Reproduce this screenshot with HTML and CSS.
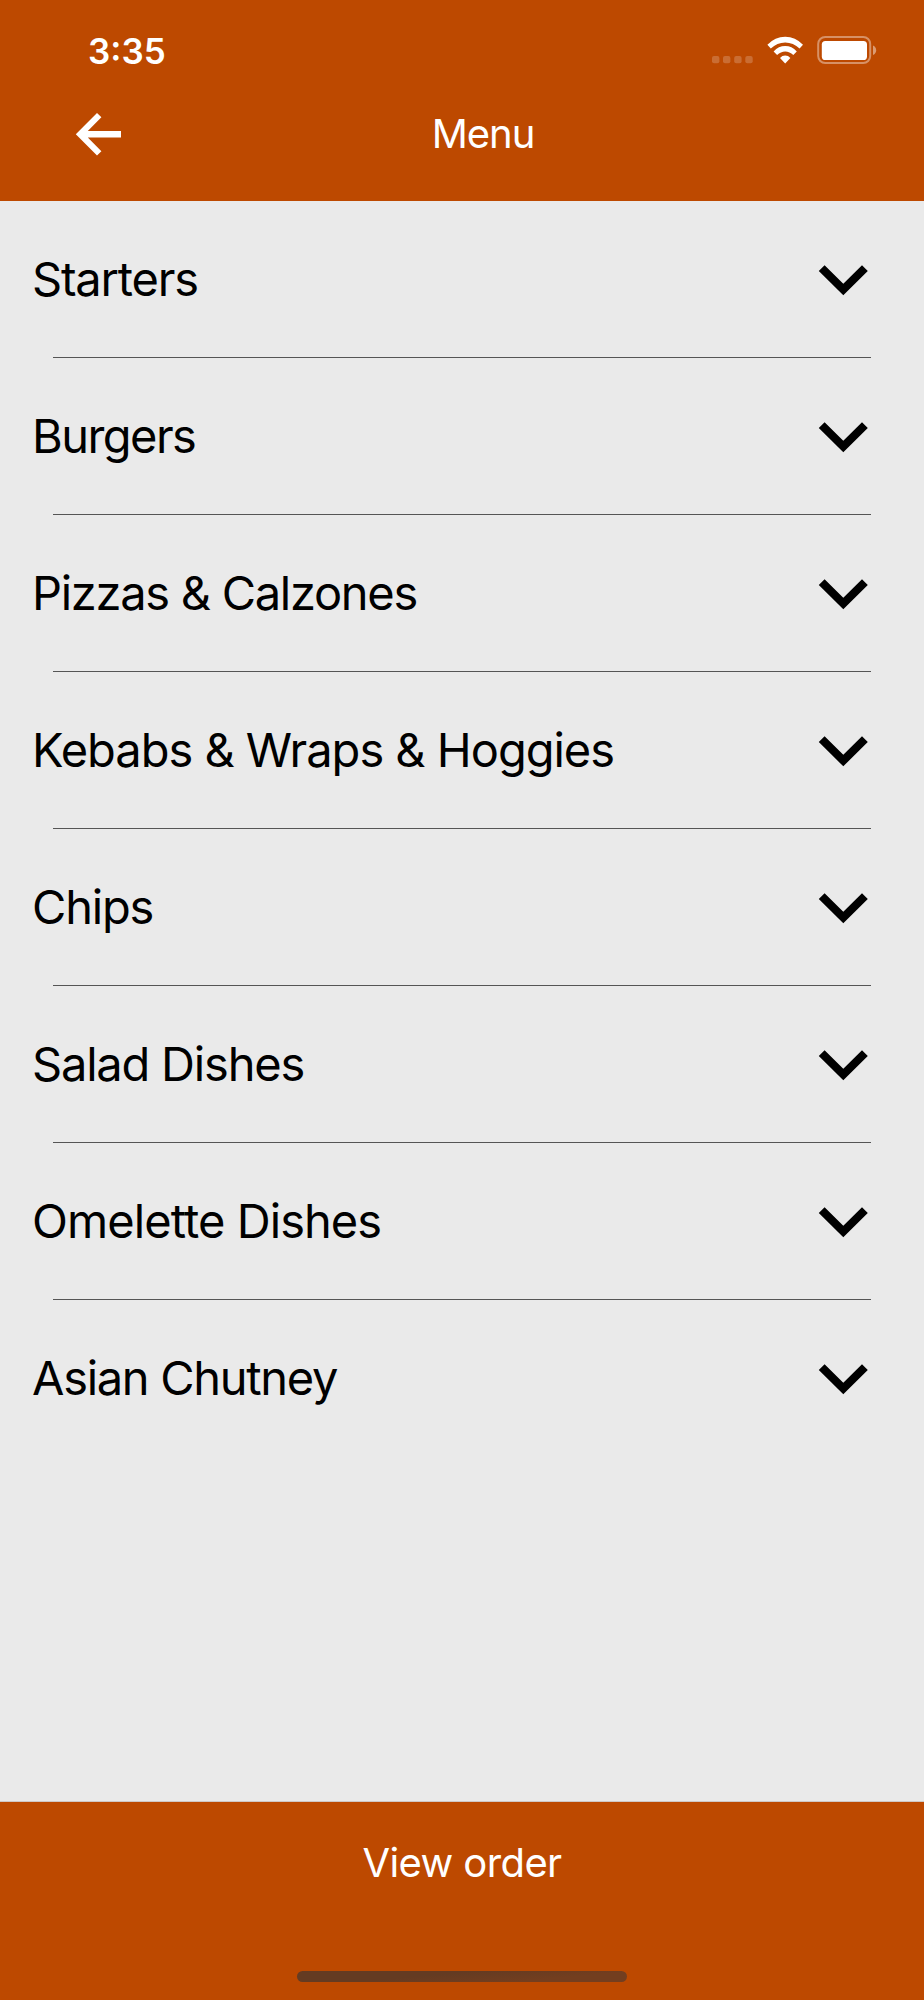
FILE: index.html
```
<!DOCTYPE html>
<html lang="en">
<head>
<meta charset="utf-8">
<title>Menu</title>
<link rel="stylesheet" href="styles.css">
</head>
<body>
<div class="screen">
  <header class="header">
    <div class="status">
      <span class="time">3:35</span>
      <svg class="status-icons" width="168" height="32" viewBox="710 34 168 32">
        <g fill="#fff" fill-opacity=".2">
          <rect x="712" y="56" width="7.4" height="7.2" rx="2"/>
          <rect x="723" y="56" width="7.4" height="7.2" rx="2"/>
          <rect x="734.2" y="56" width="7.4" height="7.2" rx="2"/>
          <rect x="745.3" y="56" width="7.4" height="7.2" rx="2"/>
        </g>
        <g fill="#fff">
          <path d="M767.4 44.8Q775 36.8 785.2 36.8T803 44.8L799.6 48.4Q793.3 42.4 785.2 42.4T770.8 48.4Z"/>
          <path d="M773.6 51.4Q778.6 46 785.2 46T796.8 51.4L793.3 55Q789.6 51.4 785.2 51.4T777.1 55Z"/>
          <path d="M780 58Q782.2 55.6 785.2 55.6T790.4 58L785.2 63.6Z"/>
        </g>
        <rect x="818.2" y="37" width="52" height="26" rx="7" fill="none" stroke="#fff" stroke-opacity=".4" stroke-width="2"/>
        <rect x="821.8" y="41" width="45.2" height="19" rx="3.6" fill="#fff"/>
        <path d="M873 45.6Q876.2 47 876.2 50.3T873 55Z" fill="#fff" fill-opacity=".45"/>
      </svg>
    </div>
    <div class="navbar">
      <svg class="back" width="46" height="44" viewBox="75 112 46 44"><path fill="#fff" d="M75.8 134.3 97 113 101.4 117.3 87.8 131H121V137.5H87.8L101.4 151.2 97 155.5Z"/></svg>
      <h1 class="title">Menu</h1>
    </div>
  </header>
  <main class="list">
    <div class="row"><span class="label">Starters</span><svg class="chevron" viewBox="0 0 50 32"><path d="M.8 7 6.6 1.2 25.3 19.7 44 1.2 49.8 7 25.3 31.3Z"/></svg></div>
    <div class="row"><span class="label burgers">Burgers</span><svg class="chevron" viewBox="0 0 50 32"><path d="M.8 7 6.6 1.2 25.3 19.7 44 1.2 49.8 7 25.3 31.3Z"/></svg></div>
    <div class="row"><span class="label pizzas">Pizzas &amp; Calzones</span><svg class="chevron" viewBox="0 0 50 32"><path d="M.8 7 6.6 1.2 25.3 19.7 44 1.2 49.8 7 25.3 31.3Z"/></svg></div>
    <div class="row"><span class="label kebabs">Kebabs &amp; Wraps &amp; Hoggies</span><svg class="chevron" viewBox="0 0 50 32"><path d="M.8 7 6.6 1.2 25.3 19.7 44 1.2 49.8 7 25.3 31.3Z"/></svg></div>
    <div class="row"><span class="label">Chips</span><svg class="chevron" viewBox="0 0 50 32"><path d="M.8 7 6.6 1.2 25.3 19.7 44 1.2 49.8 7 25.3 31.3Z"/></svg></div>
    <div class="row"><span class="label">Salad Dishes</span><svg class="chevron" viewBox="0 0 50 32"><path d="M.8 7 6.6 1.2 25.3 19.7 44 1.2 49.8 7 25.3 31.3Z"/></svg></div>
    <div class="row"><span class="label omelette">Omelette Dishes</span><svg class="chevron" viewBox="0 0 50 32"><path d="M.8 7 6.6 1.2 25.3 19.7 44 1.2 49.8 7 25.3 31.3Z"/></svg></div>
    <div class="row"><span class="label chutney">Asian Chutney</span><svg class="chevron" viewBox="0 0 50 32"><path d="M.8 7 6.6 1.2 25.3 19.7 44 1.2 49.8 7 25.3 31.3Z"/></svg></div>
  </main>
  <footer class="footer">
    <span class="order">View order</span>
    <div class="home"></div>
  </footer>
</div>
</body>
</html>
```
FILE: styles.css
```
* { box-sizing: border-box; }
body { margin: 0; font-family: Inter, "Liberation Sans", sans-serif; }
.screen { width: 924px; height: 2000px; display: flex; flex-direction: column; background: #eaeaea; }
.header { height: 201px; background: #bd4900; color: #fff; }
.status { height: 100px; padding: 34px 46px 0 88px; display: flex; justify-content: space-between; align-items: flex-start; }
.time { font-size: 35px; line-height: 34px; font-weight: 600; letter-spacing: 0; }
.status-icons { display: block; }
.navbar { height: 68px; padding: 0 75px; display: grid; grid-template-columns: 46px 1fr 4px; align-items: center; }
.back { display: block; }
.title { margin: 0; text-align: center; font-size: 40px; line-height: 48px; font-weight: 400; letter-spacing: -1px; }
.list { flex: 1; }
.row { height: 157px; padding: 0 56px 0 32px; display: flex; justify-content: space-between; align-items: center; background: linear-gradient(#555, #555) 53px 100% / 818px 1px no-repeat; }
.row:last-child { background: none; }
.label { padding-bottom: 2px; font-size: 47px; line-height: 58px; letter-spacing: -1.2px; white-space: nowrap; color: #000; }
.burgers { letter-spacing: -1.55px; }
.pizzas { letter-spacing: -1.28px; }
.kebabs { letter-spacing: -1.02px; }
.omelette { letter-spacing: -0.93px; }
.chutney { letter-spacing: -1.3px; }
.chevron { width: 50px; height: 32px; display: block; }
.footer { height: 199px; border-top: 1px solid #d0c8c4; background: #bd4900; color: #fff; display: flex; flex-direction: column; align-items: center; justify-content: space-between; padding: 36px 0 18px; }
.order { font-size: 40px; line-height: 50px; font-weight: 400; letter-spacing: -0.6px; }
.home { width: 330px; height: 11px; border-radius: 6px; background: linear-gradient(175deg, #643b22 0 40%, #733e1f 75%); }
```
